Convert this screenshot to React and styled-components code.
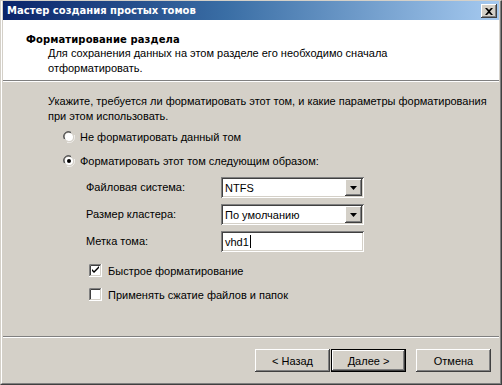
import React from "react";
import styled, { createGlobalStyle, css } from "styled-components";

const Global = createGlobalStyle`
  html, body { margin: 0; padding: 0; background: #d4d0c8; }
  body { font-family: "Liberation Sans", Arial, sans-serif; font-size: 11px; color: #000; }
  * { box-sizing: border-box; }
`;

const FONT = `"Liberation Sans", Arial, sans-serif`;
const BOLD = `"DejaVu Sans", "Liberation Sans", sans-serif`;

const Frame = styled.div`
  width: 502px;
  height: 385px;
  border-top: 1px solid #d4d0c8;
  border-left: 1px solid #d4d0c8;
  border-right: 1px solid #404040;
  border-bottom: 1px solid #404040;
  background: #d4d0c8;
`;

const Inner = styled.div`
  height: 100%;
  border-left: 1px solid #ffffff;
  border-right: 1px solid #808080;
  border-bottom: 1px solid #808080;
  padding: 0 1px 1px 1px;
  display: flex;
  flex-direction: column;
`;

const TitleBar = styled.div`
  height: 19px;
  flex: none;
  display: flex;
  align-items: center;
  justify-content: space-between;
  padding: 0 2px 0 4px;
  background: linear-gradient(to right, #0a246a 0%, #3a6ea5 45%, #a6caf0 100%);
`;

const TitleText = styled.span`
  font-family: ${BOLD};
  font-weight: bold;
  font-size: 10px;
  color: #fff;
`;

const raised = css`
  background: #d4d0c8;
  box-shadow: inset -1px -1px #404040, inset 1px 1px #ffffff,
    inset -2px -2px #808080, inset 2px 2px #d4d0c8;
`;

const sunken = css`
  background: #fff;
  box-shadow: inset 1px 1px #808080, inset -1px -1px #ffffff,
    inset 2px 2px #404040, inset -2px -2px #d4d0c8;
`;

const CloseBtn = styled.div`
  ${raised};
  width: 16px;
  height: 14px;
  display: flex;
  align-items: center;
  justify-content: center;
  margin-top: 1px;
`;

const Header = styled.div`
  flex: none;
  height: 60px;
  background: #fff;
  padding: 13px 0 0 23px;
`;

const HeaderTitle = styled.div`
  font-family: ${BOLD};
  font-weight: bold;
  font-size: 10px;
  line-height: 13px;
  letter-spacing: 0.1px;
`;

const HeaderSub = styled.div`
  font-family: ${FONT};
  font-size: 11px;
  line-height: 15px;
  padding-left: 22px;
`;

const Separator = styled.div`
  flex: none;
  height: 2px;
  border-top: 1px solid #808080;
  border-bottom: 1px solid #ffffff;
`;

const Body = styled.div`
  flex: 1;
  padding: 12px 0 0 45px;
  display: flex;
  flex-direction: column;
`;

const Intro = styled.div`
  line-height: 15px;
  margin-bottom: 5px;
`;

const OptionRow = styled.label`
  display: flex;
  align-items: center;
  height: 16px;
  gap: 5px;
  padding-left: ${(p) => p.$indent || 0}px;
  margin-top: ${(p) => p.$mt || 0}px;
`;

const FieldGrid = styled.div`
  display: grid;
  grid-template-columns: 135px 143px;
  row-gap: 6px;
  margin-top: 8px;
  padding-left: 38px;
  align-items: center;
`;

const FieldLabel = styled.span`
  line-height: 21px;
`;

const Combo = styled.div`
  ${sunken};
  height: 21px;
  display: flex;
  align-items: center;
  padding: 2px 2px 2px 4px;
`;

const ComboText = styled.span`
  flex: 1;
`;

const DropBtn = styled.div`
  ${raised};
  width: 17px;
  height: 17px;
  display: flex;
  align-items: center;
  justify-content: center;
`;

const TextBox = styled.div`
  ${sunken};
  height: 21px;
  display: flex;
  align-items: center;
  padding-left: 4px;
`;

const Caret = styled.span`
  display: inline-block;
  width: 1px;
  height: 13px;
  background: #000;
  margin-left: 1px;
`;

const CheckRow = styled.label`
  display: flex;
  align-items: center;
  height: 13px;
  gap: 6px;
  padding-left: 41px;
  margin-top: ${(p) => p.$mt}px;
`;

const ButtonBar = styled.div`
  flex: none;
  height: 44px;
  display: flex;
  justify-content: flex-end;
  align-items: flex-start;
  padding: 11px 8px 0 0;
`;

const Button = styled.div`
  ${raised};
  width: 75px;
  height: 23px;
  display: flex;
  align-items: center;
  justify-content: center;
  margin-left: ${(p) => p.$ml || 0}px;
  ${(p) =>
    p.$default &&
    css`
      border: 1px solid #000;
    `}
`;

const Radio = ({ checked }) => (
  <svg width="12" height="12" viewBox="0 0 12 12" style={{ flex: "none" }}>
    <path d="M1 8 A5.2 5.2 0 0 1 8 1" stroke="#808080" fill="none" strokeWidth="1" />
    <path d="M2.2 8.2 A4 4 0 0 1 8.2 2.2" stroke="#404040" fill="none" strokeWidth="1" />
    <circle cx="6" cy="6" r="4" fill="#fff" />
    <path d="M4 11 A5.2 5.2 0 0 0 11 4" stroke="#ffffff" fill="none" strokeWidth="1" />
    <path d="M3.8 9.8 A4 4 0 0 0 9.8 3.8" stroke="#d4d0c8" fill="none" strokeWidth="1" />
    {checked && <circle cx="6" cy="6" r="2" fill="#000" />}
  </svg>
);

const Check = ({ checked }) => (
  <svg width="13" height="13" viewBox="0 0 13 13" style={{ flex: "none" }}>
    <rect x="0" y="0" width="13" height="13" fill="#fff" />
    <path d="M0.5 12.5 V0.5 H12.5" stroke="#808080" fill="none" />
    <path d="M1.5 11.5 V1.5 H11.5" stroke="#404040" fill="none" />
    <path d="M0 12.5 H12.5 V0" stroke="#ffffff" fill="none" />
    <path d="M1.5 11.5 H11.5 V1.5" stroke="#d4d0c8" fill="none" />
    {checked && <path d="M3 5 L5 7 L10 2 V4 L5 9 L3 7 Z" fill="#000" />}
  </svg>
);

const Arrow = () => (
  <svg width="7" height="4" viewBox="0 0 7 4">
    <path d="M0 0 H7 L3.5 4 Z" fill="#000" />
  </svg>
);

const CloseIcon = () => (
  <svg width="8" height="7" viewBox="0 0 8 7">
    <path d="M0 0 H2 L4 2 L6 0 H8 L5 3.5 L8 7 H6 L4 5 L2 7 H0 L3 3.5 Z" fill="#000" />
  </svg>
);

export default function App() {
  return (
    <>
      <Global />
      <Frame>
        <Inner>
          <TitleBar>
            <TitleText>Мастер создания простых томов</TitleText>
            <CloseBtn>
              <CloseIcon />
            </CloseBtn>
          </TitleBar>
          <Header>
            <HeaderTitle>Форматирование раздела</HeaderTitle>
            <HeaderSub>
              Для сохранения данных на этом разделе его необходимо сначала
              <br />
              отформатировать.
            </HeaderSub>
          </Header>
          <Separator />
          <Body>
            <Intro>
              Укажите, требуется ли форматировать этот том, и какие параметры форматирования
              <br />
              при этом использовать.
            </Intro>
            <OptionRow $indent={15}>
              <Radio />
              Не форматировать данный том
            </OptionRow>
            <OptionRow $indent={15} $mt={8}>
              <Radio checked />
              Форматировать этот том следующим образом:
            </OptionRow>
            <FieldGrid>
              <FieldLabel>Файловая система:</FieldLabel>
              <Combo>
                <ComboText>NTFS</ComboText>
                <DropBtn>
                  <Arrow />
                </DropBtn>
              </Combo>
              <FieldLabel>Размер кластера:</FieldLabel>
              <Combo>
                <ComboText>По умолчанию</ComboText>
                <DropBtn>
                  <Arrow />
                </DropBtn>
              </Combo>
              <FieldLabel>Метка тома:</FieldLabel>
              <TextBox>
                vhd1
                <Caret />
              </TextBox>
            </FieldGrid>
            <CheckRow $mt={12}>
              <Check checked />
              Быстрое форматирование
            </CheckRow>
            <CheckRow $mt={11}>
              <Check />
              Применять сжатие файлов и папок
            </CheckRow>
          </Body>
          <Separator />
          <ButtonBar>
            <Button>&lt; Назад</Button>
            <Button $default $ml={1}>Далее &gt;</Button>
            <Button $ml={10}>Отмена</Button>
          </ButtonBar>
        </Inner>
      </Frame>
    </>
  );
}
